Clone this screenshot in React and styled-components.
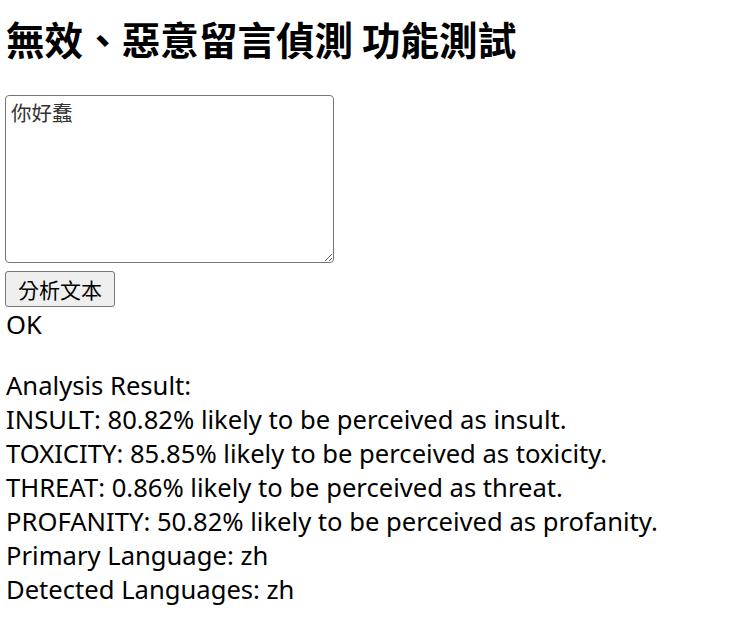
import React from "react";
import styled, { createGlobalStyle } from "styled-components";

const GlobalStyle = createGlobalStyle`
  html, body {
    margin: 0;
    background: #ffffff;
  }
  body {
    font-family: "Noto Sans", "Noto Sans CJK TC", sans-serif;
    color: #000000;
  }
`;

const Page = styled.div`
  padding: 0 0 0 6px;
`;

const Title = styled.h2`
  margin: 13px 0 32px 0;
  font-family: "Noto Sans CJK TC", sans-serif;
  font-size: 38.6px;
  line-height: 50px;
  font-weight: 700;
`;

const CommentBox = styled.textarea`
  display: block;
  box-sizing: border-box;
  width: 329px;
  height: 168px;
  margin: 0 0 0 -1px;
  padding: 3px 5px;
  border: 1px solid #767676;
  border-radius: 4px;
  font-family: "Noto Sans CJK TC", serif;
  font-size: 20.5px;
  line-height: 26px;
  color: #333;
  resize: both;
`;

const AnalyzeButton = styled.button`
  display: block;
  box-sizing: border-box;
  width: 110px;
  height: 36px;
  margin: 8px 0 0 -1px;
  padding: 0;
  border: 1px solid #767676;
  border-radius: 3px;
  background: #efefef;
  font-family: "Noto Sans CJK TC", sans-serif;
  font-size: 21px;
  color: #000;
`;

const Line = styled.div`
  font-size: 25.6px;
  line-height: 34px;
`;

const Status = styled(Line)`
  padding-top: 1px;
`;

const Result = styled.div`
  margin-top: 27px;
`;

const scores = [
  ["INSULT", "80.82", "insult"],
  ["TOXICITY", "85.85", "toxicity"],
  ["THREAT", "0.86", "threat"],
  ["PROFANITY", "50.82", "profanity"],
];

export default function App() {
  return (
    <>
      <GlobalStyle />
      <Page>
        <Title>無效、惡意留言偵測 功能測試</Title>
        <CommentBox defaultValue="你好蠢" />
        <AnalyzeButton>分析文本</AnalyzeButton>
        <Status>OK</Status>
        <Result>
          <Line>Analysis Result:</Line>
          {scores.map(([name, pct, label]) => (
            <Line key={name}>
              {name}: {pct}% likely to be perceived as {label}.
            </Line>
          ))}
          <Line>Primary Language: zh</Line>
          <Line>Detected Languages: zh</Line>
        </Result>
      </Page>
    </>
  );
}
